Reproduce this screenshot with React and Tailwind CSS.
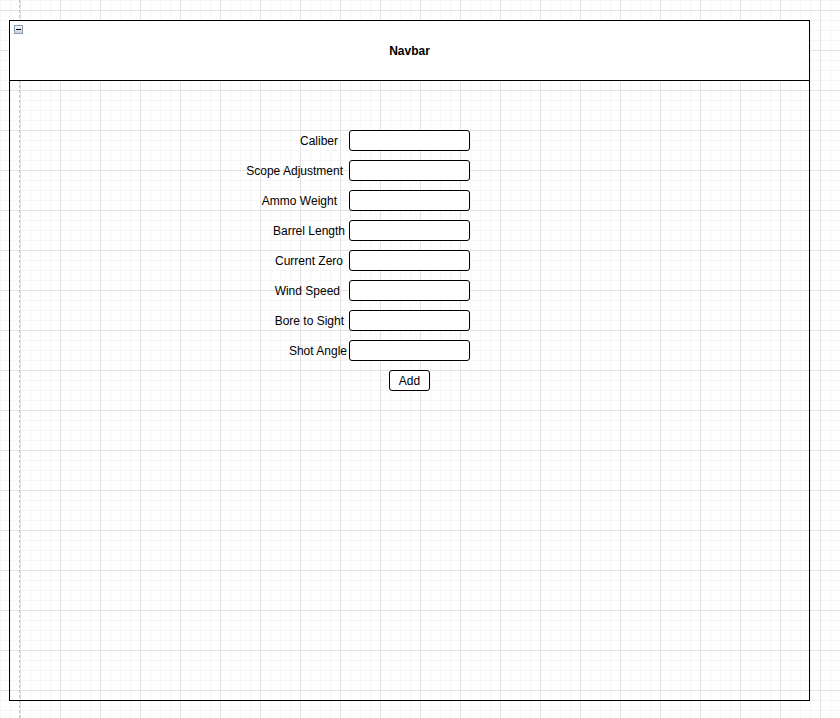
import React from "react";

const rows = [
  { label: "Caliber", pr: "pr-[11px]" },
  { label: "Scope Adjustment", pr: "pr-[6px]" },
  { label: "Ammo Weight", pr: "pr-[12px]" },
  { label: "Barrel Length", pr: "pr-[4px]" },
  { label: "Current Zero", pr: "pr-[6px]" },
  { label: "Wind Speed", pr: "pr-[9px]" },
  { label: "Bore to Sight", pr: "pr-[5px]" },
  { label: "Shot Angle", pr: "pr-[2px]" },
];

export default function App() {
  return (
    <div
      className="relative h-[718px] w-full overflow-hidden bg-white pt-[20px] text-[12px] text-black [font-family:'Liberation_Sans',Arial,sans-serif] [background-image:linear-gradient(to_right,#e3e3e3_1px,transparent_1px),linear-gradient(to_bottom,#e3e3e3_1px,transparent_1px),linear-gradient(to_right,#f6f6f6_1px,transparent_1px),linear-gradient(to_bottom,#f6f6f6_1px,transparent_1px)] [background-size:40px_40px,40px_40px,10px_10px,10px_10px] [background-position:20px_10px,20px_10px,0px_0px,0px_0px]"
    >
      <div className="absolute left-[19px] top-0 h-full border-l border-dashed border-[#c4c4c4]" />
      <div className="relative ml-[9px] flex h-[681px] w-[801px] flex-col border border-black">
        <div className="relative flex h-[60px] items-center justify-center border-b border-black bg-white font-bold">
          <div className="absolute left-[4px] top-[4px] flex h-[9px] w-[9px] items-center justify-center border border-[#8a9bb0] bg-gradient-to-b from-[#f4f6f8] to-[#c9d2dc]">
            <div className="h-px w-[5px] bg-black" />
          </div>
          Navbar
        </div>
        <div className="flex flex-col gap-[9px] pt-[49px]">
          {rows.map((r) => (
            <div key={r.label} className="flex h-[21px] items-center">
              <div className={`w-[339px] text-right ${r.pr}`}>{r.label}</div>
              <div className="h-[21px] w-[121px] rounded-[3px] border border-black bg-white" />
            </div>
          ))}
          <div className="flex h-[21px]">
            <div className="ml-[379px] flex h-[21px] w-[41px] items-center justify-center rounded-[3px] border border-black bg-white">
              Add
            </div>
          </div>
        </div>
      </div>
    </div>
  );
}
